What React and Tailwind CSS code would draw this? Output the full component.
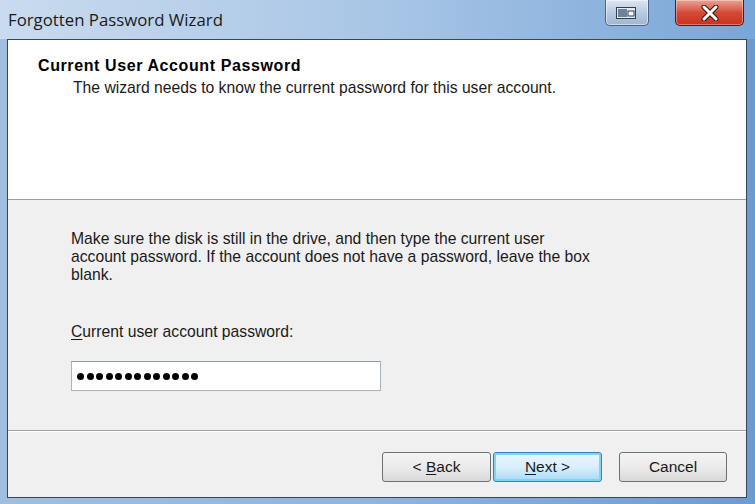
export default function App() {
  const dots = Array.from({ length: 13 });

  return (
    <div
      className="w-[755px] h-[504px] flex flex-col bg-gradient-to-r from-[#9fbfe0] via-[#8fb4de] to-[#6c9bd2] overflow-hidden"
      style={{ fontFamily: '"Liberation Sans", Arial, sans-serif' }}
    >
      {/* Title bar */}
      <div className="h-[39px] flex items-start bg-gradient-to-r from-[#c9dbee] via-[#a9c6e6] to-[#79a6d8] relative">
        <div
          className="pl-[8px] pt-[7px] text-[16.8px] text-[#1b1b1b]"
          style={{ fontFamily: '"Open Sans", "Noto Sans", sans-serif' }}
        >
          Forgotten Password Wizard
        </div>
        <div className="ml-auto flex items-start gap-[26px] mr-[11px]">
          {/* Odd restore button */}
          <div className="w-[44px] h-[26px] rounded-b-[5px] border border-t-0 border-[#4a6584] bg-gradient-to-b from-[#dce6f1] via-[#b9cbe0] to-[#9fb6d1] flex items-center justify-center shadow-[inset_0_0_0_1px_rgba(255,255,255,0.5)]">
            <svg width="24" height="14" viewBox="0 0 24 14">
              <rect x="1.5" y="1.5" width="19" height="11" fill="#e4eaf1" stroke="#2f3e52" />
              <rect x="3" y="3" width="9" height="8" fill="#6f8196" />
              <rect x="13" y="5" width="6" height="5" fill="#f4f7fa" stroke="#2f3e52" strokeWidth="1" />
            </svg>
          </div>
          {/* Close button */}
          <div className="w-[69px] h-[26px] rounded-b-[5px] border border-t-0 border-[#5a1a14] bg-gradient-to-b from-[#e7a397] via-[#d44a36] to-[#c9301d] flex items-center justify-center shadow-[inset_0_0_0_1px_rgba(255,255,255,0.35)]">
            <svg width="20" height="16" viewBox="0 0 20 16">
              <path d="M4 2 L16 14 M16 2 L4 14" stroke="#3a1410" strokeWidth="5" strokeLinecap="round" />
              <path d="M4 2 L16 14 M16 2 L4 14" stroke="#ffffff" strokeWidth="3" strokeLinecap="round" />
            </svg>
          </div>
        </div>
      </div>

      {/* Window body */}
      <div className="flex-1 ml-[7px] mr-[8px] mb-[6px] border border-[#36475c] flex flex-col bg-[#f0f0f0]">
        {/* Header */}
        <div className="h-[160px] bg-white border-b border-[#a0a0a0] pt-[16px]">
          <div className="pl-[30px] text-[16px] font-bold tracking-[0.6px] text-black leading-[20px]">
            Current User Account Password
          </div>
          <div className="pl-[65px] text-[15.7px] text-[#1a1a1a] leading-[20px] mt-[2px]">
            The wizard needs to know the current password for this user account.
          </div>
        </div>

        {/* Content */}
        <div className="flex-1 border-b border-[#a0a0a0] pl-[63px] pt-[30px] text-[15.7px] text-[#1a1a1a]">
          <p className="leading-[18px] whitespace-nowrap">
            Make sure the disk is still in the drive, and then type the current user
            <br />
            account password. If the account does not have a password, leave the box
            <br />
            blank.
          </p>
          <div className="mt-[38px] leading-[20px]">
            <span className="underline underline-offset-2">C</span>urrent user account password:
          </div>
          <div className="mt-[19px] w-[310px] h-[30px] bg-white border border-[#abb3be] border-t-[#8e9aa8] flex items-center gap-[2.5px] pl-[5px]">
            {dots.map((_, i) => (
              <span key={i} className="w-[7px] h-[7px] rounded-full bg-black" />
            ))}
          </div>
        </div>

        {/* Footer */}
        <div className="h-[66px] border-t border-white flex items-start pt-[20px] pl-[374px] text-[15.5px] text-[#1a1a1a]">
          <button className="w-[109px] h-[30px] rounded-[3px] border border-[#707070] bg-gradient-to-b from-[#f4f4f4] via-[#ebebeb] to-[#d9d9d9]">
            &lt; <span className="underline underline-offset-2">B</span>ack
          </button>
          <button className="ml-[2px] w-[109px] h-[30px] rounded-[3px] border border-[#3c7fb1] bg-gradient-to-b from-[#eaf6fd] via-[#d9f0fc] to-[#a7d9f5] shadow-[inset_0_0_0_2px_#7ed4f2]">
            <span className="underline underline-offset-2">N</span>ext &gt;
          </button>
          <button className="ml-[17px] w-[108px] h-[30px] rounded-[3px] border border-[#707070] bg-gradient-to-b from-[#f4f4f4] via-[#ebebeb] to-[#d9d9d9]">
            Cancel
          </button>
        </div>
      </div>
    </div>
  );
}
